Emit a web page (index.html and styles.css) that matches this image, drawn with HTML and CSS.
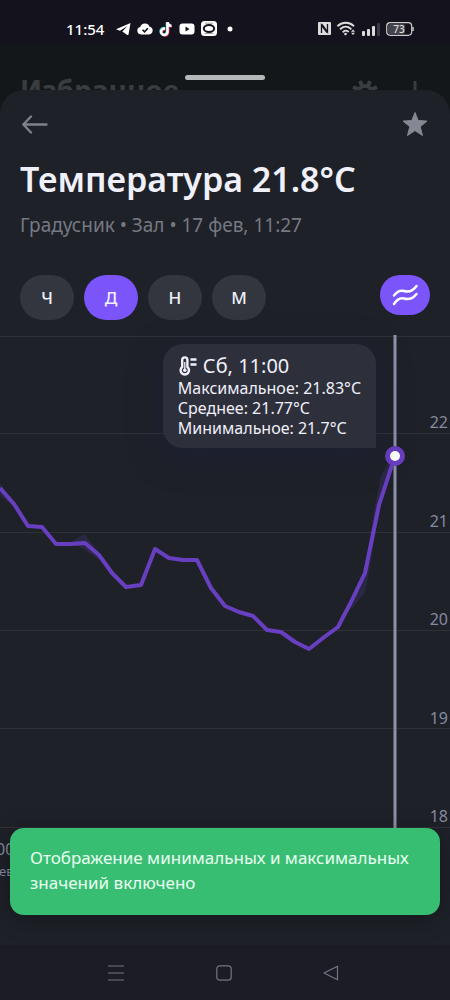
FILE: index.html
```html
<!DOCTYPE html>
<html lang="ru">
<head>
<meta charset="utf-8">
<meta name="viewport" content="width=device-width, initial-scale=1">
<title>Температура</title>
<link rel="stylesheet" href="styles.css">
</head>
<body>
<div class="screen">
  <div class="status">
    <div class="status-group">
      <span class="clock">11:54</span>
      <svg class="ico" width="15" height="14" viewBox="0 0 15 14"><path fill="#fff" d="M14.500 1 0 7.200l4 1.500L11.500 4 6.300 9.400l5 3.600c.6.300 1.100 0 1.200-.6z"/></svg>
      <svg class="ico" width="16" height="14" viewBox="0 0 16 14"><path fill="#fff" d="M4 12.400a3.700 3.700 0 0 1-.8-7.300A5 5 0 0 1 12.600 4.700 3.900 3.900 0 0 1 12 12.400z"/><path d="m5.500 7.800 2 2 3.400-3.600" fill="none" stroke="#14121c" stroke-width="1.600"/></svg>
      <svg class="ico" width="14" height="16" viewBox="0 0 14 16"><g fill="none" stroke-width="2.500"><path stroke="#25c9c5" d="M5.500 7.200a3.200 3.200 0 1 0 2.400 3.100V1.200c.2 2 1.500 3.300 3.700 3.500"/><path stroke="#e5385f" d="M6.500 8.200a3.200 3.200 0 1 0 2.700 3.100V1.800c.2 2 1.500 3.300 3.700 3.500"/><path stroke="#fff" d="M6 7.700a3.200 3.200 0 1 0 2.500 3.100V1.200c.2 2.200 1.500 3.600 3.900 3.900"/></g></svg>
      <svg class="ico" width="16" height="12" viewBox="0 0 16 12"><rect width="15" height="11" x=".5" y=".5" rx="3" fill="#fff"/><path d="M6.500 3.500v5l4-2.500z" fill="#14121c"/></svg>
      <svg class="ico" width="16" height="15" viewBox="0 0 16 15"><rect width="16" height="15" rx="3.500" fill="#fff"/><ellipse cx="8" cy="7.500" rx="5.200" ry="3.500" fill="none" stroke="#14121c" stroke-width="2"/><path d="M3.500 12.500h9M4 2.200h8" stroke="#14121c" stroke-width=".4"/></svg>
      <svg class="ico dot" width="6" height="6" viewBox="0 0 6 6"><circle cx="3" cy="3" r="2.500" fill="#fff"/></svg>
    </div>
    <div class="status-group status-right">
      <svg width="13" height="13" viewBox="0 0 13 13"><rect width="13" height="13" rx="1" fill="#ddd"/><path d="M3.500 11V3l5.500 7.500M9.500 2v8L4 2.500" fill="none" stroke="#14121c" stroke-width="1.300"/></svg>
      <svg width="19" height="15" viewBox="0 0 19 15"><g fill="none" stroke="#ddd" stroke-width="1.900" stroke-linecap="round"><path d="M1 4.700c4.500-4 11-4 15.500 0M3.700 7.800c3-2.700 7-2.700 10 0M6.300 10.700c1.500-1.300 3.300-1.300 4.800-.2"/></g><circle cx="8.500" cy="13" r="1.300" fill="#ddd"/><path d="m16 8.500 2 2.300h-4zM16 14l2-2.300h-4z" fill="#ddd"/></svg>
      <svg width="18" height="14" viewBox="0 0 18 14"><g fill="#ddd"><rect y="9" width="3" height="5" rx="1"/><rect x="5" y="7" width="3" height="7" rx="1"/><rect x="10" y="4" width="3" height="10" rx="1"/></g><rect x="15" y="1" width="3" height="13" rx="1" fill="#3a3842"/></svg>
      <svg width="28" height="14" viewBox="0 0 28 14"><rect x=".7" y=".7" width="25" height="12.600" rx="3.500" fill="none" stroke="#ccc" stroke-width="1.200"/><rect x="2" y="2" width="17" height="10" rx="2" fill="#45434c"/><path d="M27 5v4" stroke="#ccc" stroke-width="1.500"/><text x="13" y="10.500" class="battery">73</text></svg>
    </div>
  </div>

  <div class="behind">
    <div class="behind-title">Избранное</div>
    <svg width="76" height="30" viewBox="0 0 76 30"><g fill="none" stroke="#393c40"><circle cx="13" cy="14" r="7" stroke-width="3.500"/><path stroke-width="4" d="M10 7 8 2M16 7l2-5M6 10 1 8M20 10l5-2M6 18l-5 2M20 18l5 2M10 21l-2 5M16 21l2 5"/><path stroke-width="3" d="M63 2v24M51 14h24"/></g></svg>
    <span class="handle"></span>
  </div>

  <main class="sheet">
    <header class="top">
      <button class="icon-btn" aria-label="Назад"><svg width="28" height="20" viewBox="0 0 28 20"><path d="M25.500 10.500H2.500M10 2.500 2.300 10.500l7.700 8" fill="none" stroke="#7e818a" stroke-width="2.400" stroke-linecap="round" stroke-linejoin="round"/></svg></button>
      <button class="icon-btn" aria-label="В избранное"><svg width="28" height="26" viewBox="0 0 28 26"><path d="m14 1.500 3.200 8 8.800.6-6.800 5.600 2.300 8.800-7.500-4.900-7.500 4.900 2.300-8.800L2 10.100l8.800-.6z" fill="#858892" stroke="#858892" stroke-linejoin="round"/></svg></button>
    </header>
    <h1 class="title">Температура 21.8°C</h1>
    <p class="subtitle">Градусник • Зал • 17 фев, 11:27</p>

    <div class="controls">
      <div class="periods">
        <button class="pill">Ч</button>
        <button class="pill active">Д</button>
        <button class="pill">Н</button>
        <button class="pill">М</button>
      </div>
      <button class="minmax" aria-label="Минимум и максимум"><svg width="26" height="22" viewBox="0 0 26 22"><g fill="none" stroke="#fff" stroke-width="2.400" stroke-linecap="round"><path d="M2 11.500c3-4 6-5.500 10-4.500 5 1.500 9 0 12.500-5"/><path d="M2 20c3-4.500 6-6.500 10-5.500 5 1.500 9 0 12.500-4.500"/></g></svg></button>
    </div>

    <section class="chart">
      <svg class="plot" viewBox="0 0 450 560">
        <path class="grid" d="M0 1.500h450M0 98.500h450M0 197.500h450M0 295.500h450M0 393.500h450M0 492.500h450"/>
        <path class="cursor" d="M395 0v500"/>
        <path class="range" d="M0 148l14 21v3L0 160zM70 208l14-9 15 18v8l-15-11zM351 268l14-31 10-67 6-29 12-22 2 4-16 52-10 62-4 20-14 18z"/>
        <polyline class="line" points="0,153 14,169 28,191 42,192 56,209 70,209 85,208 99,220 112,238 126,252 141,250 155,214 169,223 183,225 197,225 211,253 225,271 239,277 253,281 267,295 281,297 295,307 309,314 323,303 338,292 351,267 365,238 379,170 395,121"/>
        <circle cx="395" cy="121" r="10" fill="#693fc2"/>
        <circle cx="395" cy="121" r="5" fill="#fff"/>
        <g class="ylabels">
          <text x="448" y="93">22</text>
          <text x="448" y="192">21</text>
          <text x="448" y="290">20</text>
          <text x="448" y="389">19</text>
          <text x="448" y="487">18</text>
        </g>
        <text class="xlabel" x="-4" y="520">00</text>
        <text class="xlabel xdate" x="-1" y="541">ев</text>
      </svg>
      <div class="tip">
        <div class="tip-head">
          <svg width="20" height="20" viewBox="0 0 20 20"><path d="M4.200 4a2.600 2.600 0 0 1 5.200 0v7a4.200 4.200 0 1 1-5.200 0z" fill="none" stroke="#f0f0fa" stroke-width="2.400"/><circle cx="6.800" cy="14.300" r="1.800" fill="#f0f0fa"/><path d="M6.800 6v8" stroke="#f0f0fa" stroke-width="1.300"/><path d="M12.500 3.500h6M12.500 8.500h6" stroke="#f0f0fa" stroke-width="2.400"/></svg>
          <span>Сб, 11:00</span>
        </div>
        <div>Максимальное: 21.83°C</div>
        <div>Среднее: 21.77°C</div>
        <div>Минимальное: 21.7°C</div>
      </div>
    </section>

    <div class="toast" role="status">Отображение минимальных и максимальных значений включено</div>
  </main>

  <nav class="nav">
    <button class="icon-btn" aria-label="Недавние"><svg width="16" height="16" viewBox="0 0 16 16"><path d="M0 1h16M0 8h16M0 15h16" stroke="#74747f" stroke-width="1.200"/></svg></button>
    <button class="icon-btn" aria-label="Домой"><svg width="16" height="16" viewBox="0 0 16 16"><rect x=".8" y=".8" width="14.400" height="14.400" rx="3" fill="none" stroke="#74747f" stroke-width="1.200"/></svg></button>
    <button class="icon-btn" aria-label="Назад"><svg width="16" height="16" viewBox="0 0 16 16"><path d="M14.500 1.200v13.600L1 8z" fill="none" stroke="#74747f" stroke-width="1.200" stroke-linejoin="round"/></svg></button>
  </nav>
</div>
</body>
</html>
```
FILE: styles.css
```css
* { box-sizing: border-box; }
body {
  margin: 0;
  background: #14171a;
  color: #f0f0fa;
  font-family: "Noto Sans", "Liberation Sans", sans-serif;
}
button {
  border: 0;
  padding: 0;
  background: none;
  color: inherit;
  font: inherit;
}
svg { display: block; flex: none; }
.screen {
  display: flex;
  flex-direction: column;
  min-height: 100vh;
}
.status {
  display: flex;
  justify-content: space-between;
  align-items: center;
  height: 45px;
  padding: 12px 36px 0 66px;
  background: #14121c;
}
.status-group { display: flex; align-items: center; gap: 6px; }
.clock { margin-right: 6px; font-size: 15px; line-height: 20px; font-weight: 500; color: #fff; }
.dot { margin-left: 4px; }
.battery { font-size: 10px; font-weight: 500; fill: #ddd; text-anchor: middle; }
.behind {
  position: relative;
  display: flex;
  justify-content: space-between;
  height: 45px;
  padding: 25px 22px 0 20px;
  overflow: hidden;
}
.behind svg { margin-top: 9px; }
.behind-title { font-size: 28px; line-height: 40px; font-weight: 700; color: #393c40; }
.handle {
  position: absolute;
  top: 30px;
  left: 50%;
  width: 80px;
  height: 5px;
  margin-left: -40px;
  border-radius: 3px;
  background: #b5b8b8;
}
.sheet {
  position: relative;
  flex: 1;
  overflow: hidden;
  border-radius: 24px 24px 0 0;
  background: #1e2128;
}
.top {
  display: flex;
  justify-content: space-between;
  align-items: center;
  padding: 21px 21px 0;
}
.title {
  margin: 18px 20px 0;
  font-size: 34px;
  line-height: 48px;
  font-weight: 600;
  white-space: nowrap;
}
.subtitle { margin: 8px 20px 0; font-size: 19px; line-height: 28px; color: #767982; }
.controls {
  display: flex;
  justify-content: space-between;
  align-items: flex-start;
  padding: 36px 20px 15px;
}
.periods { display: flex; gap: 10px; }
.pill {
  width: 54px;
  height: 45px;
  border-radius: 23px;
  background: #33363e;
  font-size: 17px;
  font-weight: 500;
}
.active, .minmax { background: #7b55fa; }
.minmax {
  display: flex;
  justify-content: center;
  align-items: center;
  width: 50px;
  height: 40px;
  border-radius: 20px;
}
.chart { position: relative; }
.plot { width: 100%; height: auto; }
.grid { fill: none; stroke: #2e3138; stroke-width: 1; }
.cursor { stroke: #8d92a9; stroke-width: 3; }
.range { fill: #7b55fa; opacity: .14; }
.line { fill: none; stroke: #693fc2; stroke-width: 4; stroke-linejoin: round; }
.ylabels { fill: #858ba0; font-size: 16px; text-anchor: end; }
.xlabel { fill: #858ba0; font-size: 16px; }
.xdate { font-size: 13px; }
.tip {
  position: absolute;
  top: 9px;
  right: 74px;
  padding: 10px 15px;
  border-radius: 20px 20px 0 20px;
  background: #2d2f3b;
  box-shadow: 0 8px 32px rgba(28, 32, 64, .5);
  font-size: 16px;
  line-height: 20px;
  white-space: nowrap;
}
.tip-head { display: flex; align-items: center; gap: 5px; font-size: 20px; line-height: 24px; }
.toast {
  position: absolute;
  left: 10px;
  right: 10px;
  bottom: 30px;
  padding: 17px 20px 20px;
  border-radius: 14px;
  background: #38be72;
  box-shadow: 0 4px 24px rgba(0, 0, 0, .3);
  color: #eafff2;
  font-size: 17px;
  line-height: 25px;
}
.nav {
  display: flex;
  justify-content: space-between;
  align-items: center;
  height: 55px;
  padding: 0 111px 0 108px;
  background: #1b1c26;
}
```
